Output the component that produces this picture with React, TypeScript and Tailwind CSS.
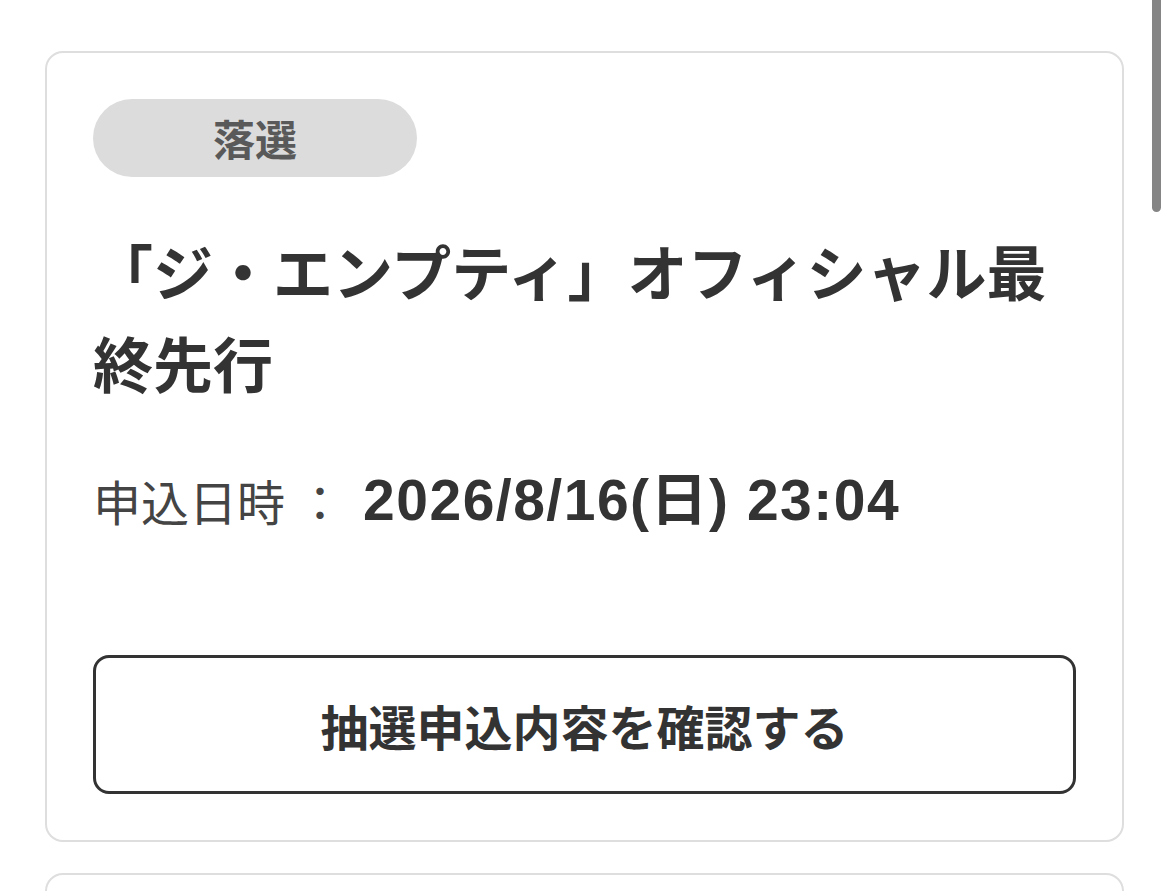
import React from "react";

const jp = '"Noto Sans CJK JP", "Noto Sans", sans-serif';
const latin = '"Liberation Sans", "Noto Sans CJK JP", sans-serif';

function EntryCard() {
  return (
    <div className="w-[1079px] rounded-[18px] border-2 border-[#dedede] bg-white p-[46px]">
      <div
        className="flex h-[78px] w-[324px] items-center justify-center rounded-full bg-[#dcdcdc] text-[42px] font-bold leading-none text-[#595959]"
        style={{ fontFamily: jp }}
      >
        落選
      </div>

      <h2
        className="mt-[47px] text-[60px] font-bold leading-[92px] text-[#333333]"
        style={{ fontFamily: jp }}
      >
        「ジ・エンプティ」オフィシャル最終先行
      </h2>

      <div className="mt-[62px] flex h-[60px] items-center">
        <span
          className="text-[48px] font-normal leading-none text-[#444444]"
          style={{ fontFamily: jp }}
        >
          申込日時
        </span>
        <span
          className="ml-[11px] text-[48px] font-normal leading-none text-[#444444]"
          style={{ fontFamily: jp }}
        >
          ：
        </span>
        <span
          className="ml-[19px] text-[57px] font-bold leading-none tracking-[1.5px] text-[#333333]"
          style={{ fontFamily: latin }}
        >
          2026/8/16(日) 23:04
        </span>
      </div>

      <button
        type="button"
        className="mt-[125px] flex h-[139px] w-full items-center justify-center rounded-[16px] border-[3px] border-[#333333] bg-white text-[48px] font-bold leading-none text-[#333333]"
        style={{ fontFamily: jp }}
      >
        抽選申込内容を確認する
      </button>
    </div>
  );
}

export default function App() {
  return (
    <div className="relative h-[891px] w-[1170px] overflow-hidden bg-white">
      <div className="flex flex-col gap-[31px] pl-[45px] pt-[51px]">
        <EntryCard />
        <div className="h-[300px] w-[1079px] rounded-[18px] border-2 border-[#dedede] bg-white" />
      </div>
      {/* scroll indicator */}
      <div className="absolute left-[1152px] top-0 h-[212px] w-[9px] rounded-b-full bg-[#858585]" />
    </div>
  );
}
